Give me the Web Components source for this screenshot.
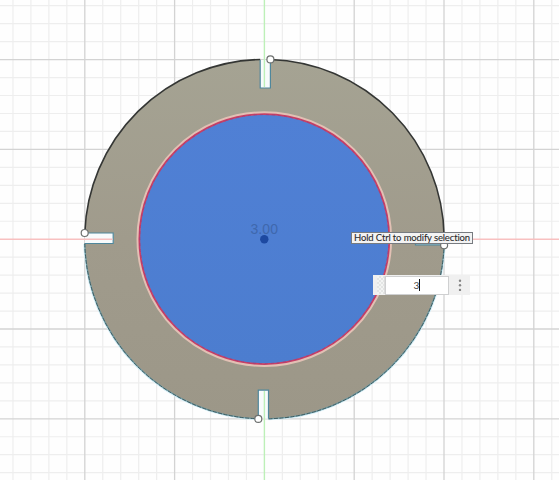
<!DOCTYPE html>
<html lang="en"><head><meta charset="utf-8"><title>Sketch</title>
<style>html,body{margin:0;width:559px;height:480px;overflow:hidden;background:#fefefe}</style></head>
<body>
<sketch-canvas>
  <sketch-profile></sketch-profile>
  <value-input slot="overlay" value="3"></value-input>
  <hint-tip slot="overlay">Hold Ctrl to modify selection</hint-tip>
</sketch-canvas>
<script>
class Base extends HTMLElement{
  constructor(){super();this.attachShadow({mode:'open'}).innerHTML=this.view()}
}
customElements.define('sketch-canvas',class extends Base{
  view(){
    let minor='',major='';
    for(let i=-15;i<=17;i++){
      if(i===0)continue;
      const x=264.4+i*17.96,y=239.2+i*17.96;
      const d=`M${x.toFixed(2)} 0V480M0 ${y.toFixed(2)}H559`;
      if(i%5===0)major+=d;else minor+=d;
    }
    return `<style>
      :host{display:block;position:relative;width:559px;height:480px;overflow:hidden}
      svg{display:block}
      .stage{position:absolute;inset:0}
    </style>
    <svg width="559" height="480" fill="none">
      <path d="${minor}" stroke="#eeeeee" stroke-width="1.2"/>
      <path d="${major}" stroke="#d3d3d3" stroke-width="1.3"/>
    </svg>
    <div class="stage"><slot></slot></div><slot name="overlay"></slot>`;
  }
});
customElements.define('sketch-profile',class extends Base{
  view(){return `<style>:host{display:block}svg{display:block}text{font:14px "Liberation Sans",Arial,sans-serif}</style>
  <svg width="559" height="480" fill="none">
    <defs><linearGradient id="body" x1="0" y1="0" x2="0" y2="1"><stop offset="0" stop-color="#a5a393"/><stop offset=".5" stop-color="#a09b8c"/><stop offset="1" stop-color="#9c9788"/></linearGradient>
    <linearGradient id="blue" x1="0" y1="0" x2="0" y2="1"><stop offset="0" stop-color="#5080d5"/><stop offset="1" stop-color="#4c7dcf"/></linearGradient></defs>
    <path d="M84.8 244A179.7 179.7 0 0 0 258.5 418.8M268.5 418.8A179.7 179.7 0 0 0 444.1 244.8" stroke="#d3edf6" stroke-width="3"/>
    <path fill="url(#body)" d="M260.2 59.5V88H270.4V59.5A179.7 179.7 0 0 1 444.1 234.5H415.5V244.8H444.1A179.7 179.7 0 0 1 268.5 418.8V390.2H258.3V418.8A179.7 179.7 0 0 1 84.8 243.5H113.2V233H84.8A179.7 179.7 0 0 1 260.2 59.5Z"/>
    <path d="M84.8 233A179.7 179.7 0 0 1 260.2 59.5M270.4 59.5A179.7 179.7 0 0 1 444.1 236" stroke="#343634" stroke-width="1.6"/>
    <path d="M84.8 243.5A179.7 179.7 0 0 0 258.3 418.8M268.5 418.8A179.7 179.7 0 0 0 444.1 244.8" stroke="#6f9ba4" stroke-width="1.3"/>
    <path d="M84.8 243.5A179.7 179.7 0 0 0 258.3 418.8M268.5 418.8A179.7 179.7 0 0 0 444.1 244.8" stroke="#3c5659" stroke-width=".9" stroke-dasharray="4 1.5"/>
    <g stroke="#4f879c" stroke-width="1.2">
      <path d="M260.2 60V88H270.4V60M85 233H113.2V243.5H85M258.3 418V390.2H268.5V418.8M444 244.8H415.5V234.5H444" fill="#f8fbfc"/>
    </g>
    <path d="M264.4 0V87M264.4 391V480" stroke="#bdf0b8" stroke-width="1.4"/>
    <path d="M0 239.2H112.5M444.5 239.2H559" stroke="#f8c0c0" stroke-width="1.4"/>
    <circle cx="264.3" cy="239.1" r="126.2" fill="url(#blue)" stroke="#e2c0b4" stroke-width="3.2"/>
    <circle cx="264.3" cy="239.1" r="125" stroke="#c93f65" stroke-width="1.7"/>
    <circle cx="264.3" cy="239.1" r="124.5" stroke="#9c3d7c" stroke-width=".7" stroke-dasharray="3 3"/>
    <text x="250.5" y="234" fill="#3f68ad" textLength="27.5">3.00</text>
    <circle cx="264.3" cy="239.2" r="4.2" fill="#1d49a1"/>
    <g fill="#fff" stroke="#6d706f" stroke-width="1.2"><circle cx="270.4" cy="59.4" r="3.5"/><circle cx="84.7" cy="233" r="3.5"/><circle cx="258.3" cy="418.9" r="3.5"/><circle cx="444.1" cy="245.3" r="3.5"/></g>
  </svg>`}
});
customElements.define('hint-tip',class extends Base{
  view(){return `<style>:host{position:absolute;left:351px;top:232px;width:122px;height:12px;box-sizing:border-box;border:1px solid #777b80;background:#f3f3f3;color:#292929;font:9.5px/10px Lato,"Open Sans",sans-serif;display:flex;justify-content:center;white-space:nowrap;-webkit-text-stroke:.1px #292929}span{letter-spacing:-.14px}</style><span><slot></slot></span>`}
});
customElements.define('value-input',class extends Base{
  view(){return `<style>
    :host{position:absolute;left:373px;top:275px;width:97px;height:20px;box-sizing:border-box;background:#f0f0f0;display:flex;align-items:center;padding-left:4px}
    .grip{width:8px;height:18px;box-sizing:border-box;border-right:1px solid #dcdcdc;background:repeating-conic-gradient(#e3e5e4 0 25%,#f3f4f3 0 50%) 0 0/4px 4px}
    .field{width:64px;height:19px;box-sizing:border-box;border:1px solid #cfd0d1;background:#fff;display:flex;align-items:center;justify-content:center;font:10px Lato,sans-serif;color:#444}
    i{width:1px;height:12px;background:#111}
    svg{margin-left:8px}
  </style><div class="grip"></div><div class="field"><span></span><i></i></div><svg width="6" height="14" fill="#858585"><circle cx="3" cy="2.7" r="1.2"/><circle cx="3" cy="7.3" r="1.2"/><circle cx="3" cy="11.9" r="1.2"/></svg>`}
  connectedCallback(){this.shadowRoot.querySelector('span').textContent=this.getAttribute('value')}
});
</script></body></html>
